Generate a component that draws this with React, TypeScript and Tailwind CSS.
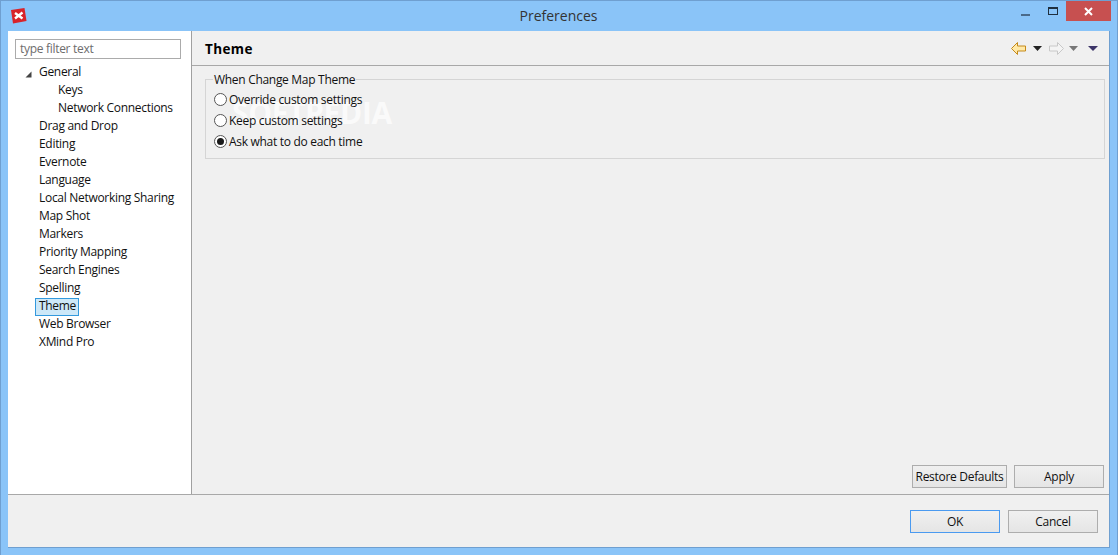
import type { ReactNode } from "react";

const treeItems = [
  "Drag and Drop",
  "Editing",
  "Evernote",
  "Language",
  "Local Networking Sharing",
  "Map Shot",
  "Markers",
  "Priority Mapping",
  "Search Engines",
  "Spelling",
];

function AppLogo() {
  return (
    <svg width="17" height="17" viewBox="0 0 17 17" className="ml-[9px] mt-[6px] shrink-0">
      <path d="M1 3 L14.5 1 L16.5 14 L3 16.5 Z" fill="#d8232a" />
      <path d="M5 6 L12.5 11.5 M12.5 5.5 L5 11.5" stroke="#fff" strokeWidth="2.4" />
    </svg>
  );
}

function TitleBar() {
  return (
    <div className="flex h-[30px] shrink-0">
      <div className="flex-1">
        <AppLogo />
      </div>
      <div className="pl-[5px] pt-[6px] text-[14px] leading-[18px] tracking-normal text-[#333]">Preferences</div>
      <div className="flex flex-1 items-start justify-end pr-[6px]">
        <div className="flex h-[21px] w-[27px] items-center justify-center">
          <div className="mt-[6px] h-[2px] w-[9px] bg-[#4a6a8a]" />
        </div>
        <div className="flex h-[21px] w-[27px] items-center justify-center">
          <div className="mb-[2px] h-[8px] w-[10px] border border-t-[2px] border-[#1f2f3f]" />
        </div>
        <div className="flex h-[20px] w-[45px] items-center justify-center bg-[#c75050]">
          <svg width="9" height="9" viewBox="0 0 9 9">
            <path d="M1 1 L8 8 M8 1 L1 8" stroke="#fff" strokeWidth="2" />
          </svg>
        </div>
      </div>
    </div>
  );
}

function TreeRow({ children, indent = 31 }: { children: ReactNode; indent?: number }) {
  return (
    <div className="flex h-[18px] items-center pb-[2px] text-[#111]" style={{ paddingLeft: indent }}>
      {children}
    </div>
  );
}

function Sidebar() {
  return (
    <div className="flex w-[183px] shrink-0 flex-col bg-white">
      <div className="ml-[7px] mt-[8px] flex h-[20px] w-[166px] items-center border border-[#ababab] pl-[4px] text-[#6d6d6d]">
        type filter text
      </div>
      <div className="mt-[5px]">
        <div className="relative">
          <svg width="7" height="7" viewBox="0 0 7 7" className="absolute left-[17px] top-[7px]">
            <path d="M6.5 0.5 V6.5 H0.5 Z" fill="#444" />
          </svg>
          <TreeRow>General</TreeRow>
        </div>
        <TreeRow indent={50}>Keys</TreeRow>
        <TreeRow indent={50}>Network Connections</TreeRow>
        {treeItems.map((item) => (
          <TreeRow key={item}>{item}</TreeRow>
        ))}
        <div className="ml-[27px] flex h-[18px] w-[44px] items-center border border-[#3399dd] bg-[#cde8f8] pb-[2px] pl-[3px] text-[#111]">
          Theme
        </div>
        <TreeRow>Web Browser</TreeRow>
        <TreeRow>XMind Pro</TreeRow>
      </div>
    </div>
  );
}

function Radio({ label, checked = false }: { label: string; checked?: boolean }) {
  return (
    <div className="relative z-10 flex h-[21px] items-center gap-[2px] text-[#111]">
      <div className="flex size-[13px] items-center justify-center rounded-full border border-[#555] bg-white">
        {checked && <div className="size-[7px] rounded-full bg-[#1a1a1a]" />}
      </div>
      <span>{label}</span>
    </div>
  );
}

function Btn({ children, className }: { children: ReactNode; className: string }) {
  return (
    <div
      className={`flex h-[23px] items-center justify-center border bg-gradient-to-b from-[#f0f0f0] to-[#e5e5e5] text-[#111] ${className}`}
    >
      {children}
    </div>
  );
}

function Arrow({ dir, fill, stroke }: { dir: "left" | "right"; fill: string; stroke: string }) {
  return (
    <svg width="15" height="13" viewBox="0 0 15 13">
      <path
        d={dir === "left" ? "M0.5 6.5 L6.5 0.5 V4 H14.5 V9 H6.5 V12.5 Z" : "M14.5 6.5 L8.5 0.5 V4 H0.5 V9 H8.5 V12.5 Z"}
        fill={fill}
        stroke={stroke}
      />
    </svg>
  );
}

function Caret({ color, wide = false }: { color: string; wide?: boolean }) {
  return (
    <svg width={wide ? 10 : 9} height="5" viewBox={wide ? "0 0 10 5" : "0 0 9 5"}>
      <path d={wide ? "M0 0 H10 L5 5 Z" : "M0 0 H9 L4.5 5 Z"} fill={color} />
    </svg>
  );
}

function ThemePage() {
  return (
    <div className="flex min-w-0 flex-1 flex-col border-l border-[#a0a0a0] bg-[#f0f0f0]">
      <div className="flex h-[35px] shrink-0 items-center border-b border-[#a8a8a8] pl-[13px]">
        <span className="flex-1 pt-[2px] text-[13.5px] font-bold tracking-[0.4px] text-black">Theme</span>
        <div className="mr-[11px] flex items-center">
          <Arrow dir="left" fill="#ffe9a8" stroke="#c58a1a" />
          <div className="ml-[7px] flex"><Caret color="#222" /></div>
          <div className="ml-[7px] flex"><Arrow dir="right" fill="#f4f4f4" stroke="#c8c8c8" /></div>
          <div className="ml-[5px] flex"><Caret color="#777" /></div>
          <div className="ml-[10px] flex"><Caret color="#3c3468" wide /></div>
        </div>
      </div>
      <div className="relative mx-[13px] mt-[13px] h-[80px] w-[900px] border border-[#d5d5d5] pl-[8px] pt-[9px]">
        <div className="absolute left-[7px] top-[-7px] bg-[#f0f0f0] px-[1px] leading-[14px] text-[#111]">
          When Change Map Theme
        </div>
        <Radio label="Override custom settings" />
        <Radio label="Keep custom settings" />
        <Radio label="Ask what to do each time" checked />
        <div className="absolute left-[26px] top-[13px] text-[30px] font-bold leading-[40px] tracking-[-0.3px] text-white/70">
          SOFTPEDIA
        </div>
      </div>
      <div className="flex-1" />
      <div className="mb-[6px] flex justify-end gap-[7px] pr-[5px]">
        <Btn className="w-[95px] border-[#adadad]">Restore Defaults</Btn>
        <Btn className="w-[90px] border-[#adadad]">Apply</Btn>
      </div>
    </div>
  );
}

export default function App() {
  return (
    <div
      className="flex h-[555px] w-[1118px] flex-col overflow-hidden border border-b-0 border-[#6f9fd0] bg-[#8ac4f8] text-[12px] tracking-[-0.3px]"
      style={{ fontFamily: '"Open Sans", "Noto Sans", sans-serif' }}
    >
      <TitleBar />
      <div className="mx-[7px] mb-[7px] flex min-h-0 flex-1 flex-col border border-l-0 border-t-0 border-[#6f9fd0] bg-[#f0f0f0]">
        <div className="flex min-h-0 flex-1">
          <Sidebar />
          <ThemePage />
        </div>
        <div className="flex h-[53px] shrink-0 justify-end gap-[8px] border-t border-[#a8a8a8] pr-[11px] pt-[15px]">
          <Btn className="w-[90px] border-[#4a9af0]">OK</Btn>
          <Btn className="w-[90px] border-[#adadad]">Cancel</Btn>
        </div>
      </div>
    </div>
  );
}
